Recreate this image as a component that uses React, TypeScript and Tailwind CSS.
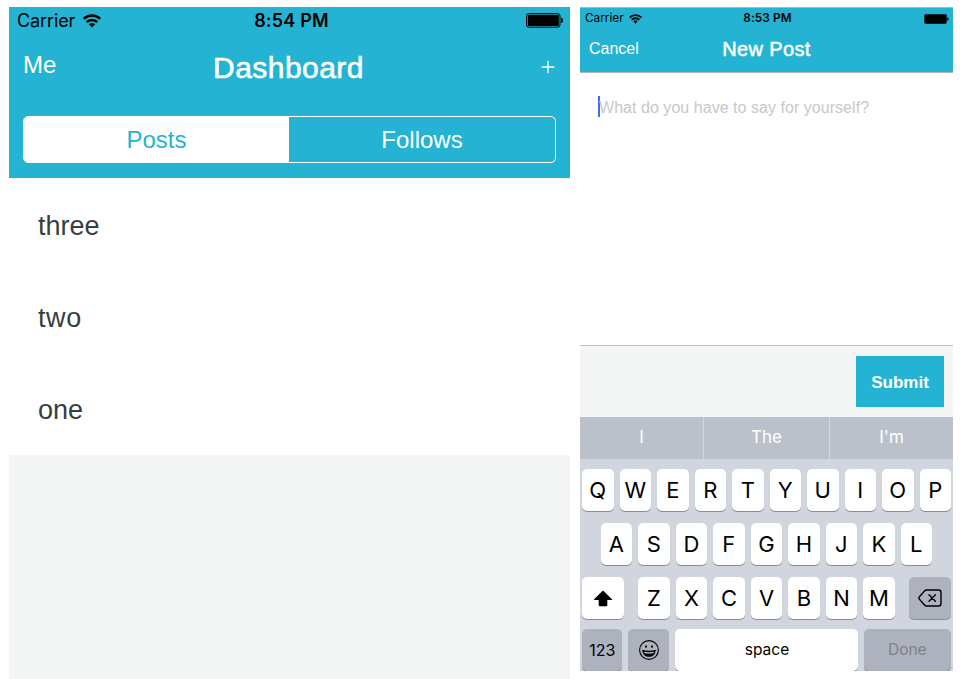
import React from "react";

function Wifi({ className }: { className: string }) {
  return (
    <svg viewBox="0 0 18 14" className={className} fill="none" stroke="#000" strokeWidth="2.6">
      <path d="M0.8 4.9C5.4 0.4 12.6 0.4 17.2 4.9" />
      <path d="M3.7 8.1C6.7 5.2 11.3 5.2 14.3 8.1" />
      <path d="M5.9 10.2Q9 7.6 12.1 10.2L9 13.6Z" fill="#000" stroke="none" />
    </svg>
  );
}

function Battery({ className }: { className: string }) {
  return (
    <svg viewBox="0 0 38 15" className={className}>
      <rect x="0.6" y="0.6" width="33.4" height="13.6" rx="2.2" fill="none" stroke="#000" strokeWidth="1" />
      <rect x="1.8" y="1.8" width="31" height="11.2" rx="1" />
      <path d="M35 4.8c2.6 0 2.6 5.2 0 5.2z" />
    </svg>
  );
}

function SmallBattery() {
  return (
    <svg viewBox="0 0 25 10" className="h-[10px] w-[25px] justify-self-end">
      <rect x="0.3" y="0.3" width="22.4" height="9.4" rx="1.4" />
      <path d="M23.3 3.2c1.7 0 1.7 3.6 0 3.6z" />
    </svg>
  );
}

function Key({ label }: { label: string }) {
  return (
    <div className="flex h-[42px] w-[31.5px] shrink-0 items-center justify-center rounded-[5px] bg-white pt-px text-[22px] text-black shadow-[0_1px_0_#898c91]">
      {label}
    </div>
  );
}

function Dashboard() {
  return (
    <section className="mt-[7px] flex h-[672px] w-[561px] flex-col bg-[#f4f6f6]">
      <header className="h-[171px] bg-[#24b3d3]">
        <div className="grid h-[26px] grid-cols-3 items-center pr-[6px] pl-2 font-[Inter,sans-serif] text-[18px] text-black">
          <div className="flex items-center gap-[8px]">
            <span className="tracking-[-0.1px]">Carrier</span>
            <Wifi className="h-[14px] w-[18px]" />
          </div>
          <span className="pl-[2px] text-center font-semibold tracking-[0.2px]">8:54 PM</span>
          <Battery className="h-[15px] w-[38px] justify-self-end" />
        </div>
        <div className="grid h-[66px] grid-cols-[80px_1fr_80px] pr-[9px] pl-[14px] text-white">
          <span className="pt-[18px] text-[24px] leading-[28px]">Me</span>
          <span className="pt-[18px] pr-[7px] text-center text-[30px] leading-[34px] tracking-[0.45px] [-webkit-text-stroke:0.6px_white]">Dashboard</span>
          <svg viewBox="0 0 14 14" className="mt-[27px] mr-[6px] h-[14px] w-[14px] justify-self-end" stroke="white" strokeWidth="1.3">
            <path d="M7 0.7V13.3M0.7 7H13.3" />
          </svg>
        </div>
        <div className="mx-[14px] mt-[17px] flex h-[47px] overflow-hidden rounded-[5px] border-[1.5px] border-white text-[24px]">
          <span className="flex w-[265px] items-center justify-center bg-white text-[#24b3d3]">Posts</span>
          <span className="flex flex-1 items-center justify-center text-white">Follows</span>
        </div>
      </header>
      <ul className="h-[277px] bg-white text-[27px] text-[#353f40]">
        <li className="flex h-[92px] items-center pt-[5px] pl-[29px]">three</li>
        <li className="flex h-[92px] items-center pt-[5px] pl-[29px] tracking-[0.6px]">two</li>
        <li className="flex h-[93px] items-center pt-[4px] pl-[29px]">one</li>
      </ul>
    </section>
  );
}

function Keyboard() {
  return (
    <div className="flex h-[212px] flex-col overflow-hidden bg-[#d1d5dd] px-[2px] pt-[10px] font-[Inter,sans-serif]">
      <div className="mb-[12px] flex gap-[6px]">
        {"QWERTYUIOP".split("").map((c) => <Key key={c} label={c} />)}
      </div>
      <div className="mb-[12px] ml-[18.6px] flex gap-[6px]">
        {"ASDFGHJKL".split("").map((c) => <Key key={c} label={c} />)}
      </div>
      <div className="mb-[10px] flex justify-between pr-[2px]">
        <div className="flex h-[42px] w-[42px] items-center justify-center rounded-[5px] bg-white shadow-[0_1px_0_#898c91]">
          <svg viewBox="0 0 20 17" className="h-[17px] w-[20px]">
            <path d="M10 0.5L19 9.2Q19.3 9.9 18.5 9.9H14.3V15.2Q14.3 16.3 13.2 16.3H6.8Q5.7 16.3 5.7 15.2V9.9H1.5Q0.7 9.9 1 9.2Z" />
          </svg>
        </div>
        <div className="flex gap-[6px]">
          {"ZXCVBNM".split("").map((c) => <Key key={c} label={c} />)}
        </div>
        <div className="-mr-[2px] flex h-[42px] w-[42px] items-center justify-center rounded-[5px] bg-[#adb2be] shadow-[0_1px_0_#898c91]">
          <svg viewBox="0 0 24 18" className="h-[18px] w-[24px]" fill="none" stroke="#000" strokeWidth="1.4" strokeLinecap="round" strokeLinejoin="round">
            <path d="M8.3 1H20.5Q23 1 23 3.5V14.5Q23 17 20.5 17H8.3Q7.4 17 6.8 16.3L1.2 10Q.4 9 1.2 8L6.8 1.7Q7.4 1 8.3 1Z" />
            <path d="M11 5.7L17.4 12.3M17.4 5.7L11 12.3" />
          </svg>
        </div>
      </div>
      <div className="flex gap-[6px] text-[16px]">
        <div className="flex h-[42px] w-[40.5px] items-center justify-center rounded-[5px] bg-[#adb2be] shadow-[0_1px_0_#898c91]">123</div>
        <div className="flex h-[42px] w-[41px] items-center justify-center rounded-[5px] bg-[#adb2be] shadow-[0_1px_0_#898c91]">
          <svg viewBox="0 0 22 22" className="h-[22px] w-[22px]" fill="none" stroke="#000" strokeWidth="1.1">
            <circle cx="11" cy="11" r="9.4" />
            <ellipse cx="8" cy="7.6" rx="0.9" ry="1.3" fill="#000" stroke="none" />
            <ellipse cx="14" cy="7.6" rx="0.9" ry="1.3" fill="#000" stroke="none" />
            <path d="M4.8 11.5Q11 13.2 17.2 11.5Q16.5 17.3 11 17.3Q5.5 17.3 4.8 11.5Z" fill="#000" />
            <path d="M6 12.7Q11 14 16 12.7L15.5 14Q11 15.2 6.5 14Z" fill="#d1d5dd" stroke="none" />
          </svg>
        </div>
        <div className="flex h-[42px] w-[182.5px] items-center justify-center rounded-[5px] bg-white pb-px pl-px text-[15.5px] shadow-[0_1px_0_#898c91]">space</div>
        <div className="flex h-[42px] w-[87.5px] items-center justify-center rounded-[5px] bg-[#adb2be] pb-px text-[15.5px] text-[#7d828a] shadow-[0_1px_0_#898c91]">Done</div>
      </div>
    </div>
  );
}

function NewPost() {
  return (
    <section className="mt-[7px] flex h-[664px] w-[373px] flex-col">
      <header className="h-[66px] border-y border-[#b0b5b5] bg-[#24b3d3]">
        <div className="grid h-[21px] grid-cols-3 items-center pr-[4px] pl-[5px] font-[Inter,sans-serif] text-[11.8px] text-black">
          <div className="flex items-center gap-[5px]">
            <span>Carrier</span>
            <Wifi className="h-[10px] w-[13px]" />
          </div>
          <span className="pl-px text-center font-semibold tracking-[0.1px]">8:53 PM</span>
          <SmallBattery />
        </div>
        <div className="grid grid-cols-[80px_1fr_80px] px-[9px] text-white">
          <span className="pt-[11px] text-[16px] leading-[18px]">Cancel</span>
          <span className="pt-[8px] text-center text-[20px] leading-[24px] tracking-[0.35px] [-webkit-text-stroke:0.5px_white]">New Post</span>
        </div>
      </header>
      <div className="flex h-[272px] items-start bg-white pt-[23px] pl-[18px]">
        <span className="h-[21px] w-[2px] bg-[#416af0]" />
        <span className="-ml-px pt-[3px] text-[16px] leading-[18px] tracking-[0.04px] text-[#c8c8c8]">What do you have to say for yourself?</span>
      </div>
      <div className="flex h-[72px] justify-end border-t border-[#bfc1c2] bg-[#f4f6f6] pt-[10px] pr-[9px]">
        <button className="h-[51px] w-[88px] bg-[#24b3d3] pt-[2px] text-[17px] font-bold text-white">Submit</button>
      </div>
      <div className="grid h-[42px] grid-cols-[124px_126px_123px] bg-[#bac1ca] font-[Inter,sans-serif] text-[17px] text-white">
        <span className="flex items-center justify-center border-r border-[#d4d8de] pb-px">I</span>
        <span className="flex items-center justify-center border-r border-[#d4d8de] pb-px">The</span>
        <span className="flex items-center justify-center pb-px">I'm</span>
      </div>
      <Keyboard />
    </section>
  );
}

export default function App() {
  return (
    <main className="flex h-[679px] w-[960px] gap-[10px] overflow-hidden bg-white pl-[9px] font-['Liberation_Sans',Arial,sans-serif]">
      <Dashboard />
      <NewPost />
    </main>
  );
}
